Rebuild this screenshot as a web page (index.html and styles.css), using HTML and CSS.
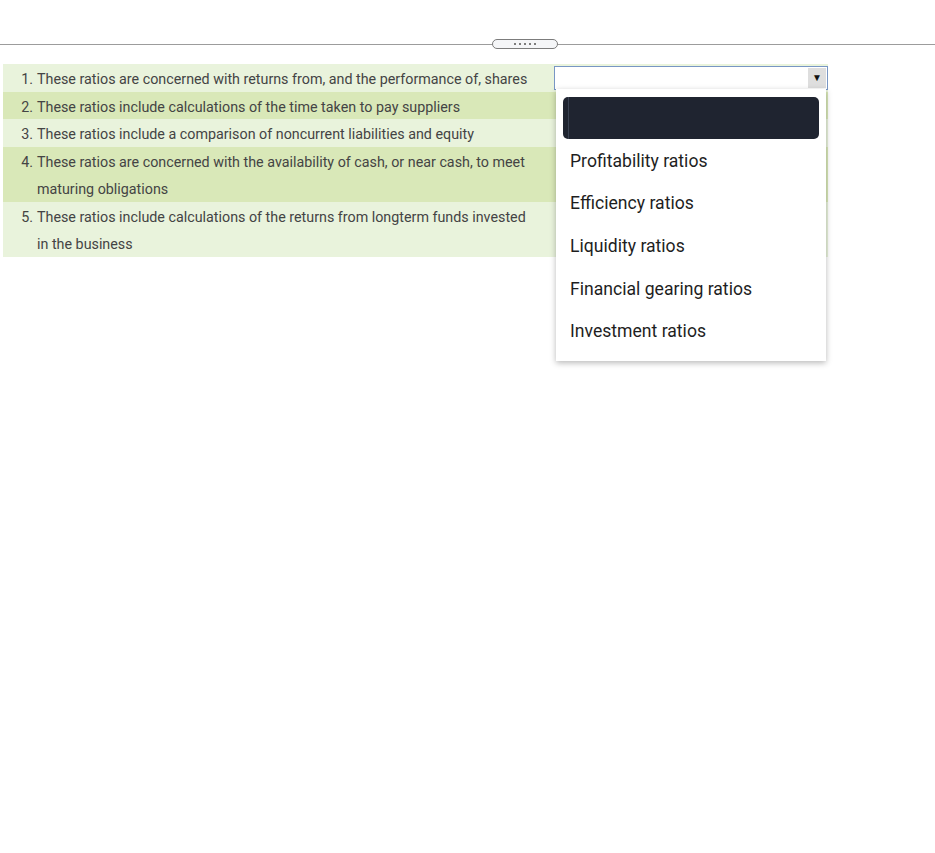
FILE: index.html
```html
<!DOCTYPE html>
<html>
<head>
<meta charset="utf-8">
<link rel="stylesheet" href="styles.css">
</head>
<body>
<div class="splitter">
  <div class="handle"><span></span><span></span><span></span><span></span><span></span></div>
</div>
<div class="quiz">
  <div class="row light">
    <div class="num">1.</div>
    <div class="txt">These ratios are concerned with returns from, and the performance of, shares</div>
    <div class="sel">
      <div class="select"><div class="arrow">▼</div></div>
    </div>
  </div>
  <div class="row dark">
    <div class="num">2.</div>
    <div class="txt">These ratios include calculations of the time taken to pay suppliers</div>
    <div class="sel"></div>
  </div>
  <div class="row light">
    <div class="num">3.</div>
    <div class="txt">These ratios include a comparison of noncurrent liabilities and equity</div>
    <div class="sel"></div>
  </div>
  <div class="row dark">
    <div class="num">4.</div>
    <div class="txt">These ratios are concerned with the availability of cash, or near cash, to meet maturing obligations</div>
    <div class="sel"></div>
  </div>
  <div class="row light">
    <div class="num">5.</div>
    <div class="txt">These ratios include calculations of the returns from longterm funds invested in the business</div>
    <div class="sel"></div>
  </div>
  <div class="dropdown">
    <div class="opt active"><span class="edge"></span></div>
    <div class="opt">Profitability ratios</div>
    <div class="opt">Efficiency ratios</div>
    <div class="opt">Liquidity ratios</div>
    <div class="opt">Financial gearing ratios</div>
    <div class="opt">Investment ratios</div>
  </div>
</div>
</body>
</html>
```
FILE: styles.css
```css
html, body {
  margin: 0;
  font-family: Roboto, "Liberation Sans", sans-serif;
  background: #fff;
}
.splitter {
  position: relative;
  height: 44px;
  border-bottom: 1px solid #9c9c9c;
}
.handle {
  position: absolute;
  left: 492px;
  top: 39px;
  width: 64px;
  height: 8px;
  border: 1px solid #7c7c7c;
  border-radius: 5px;
  background: #f5f6f8;
  display: flex;
  justify-content: center;
  align-items: center;
  gap: 3px;
}
.handle span {
  width: 2px;
  height: 2px;
  background: #555;
  border-radius: 1px;
}
.quiz {
  position: relative;
  margin: 19px 0 0 3px;
  width: 825px;
  min-height: 310px;
}
.row {
  display: grid;
  grid-template-columns: 34px 513px 278px;
  font-size: 14.3px;
  line-height: 27.5px;
  color: #444;
}
.light { background: #e9f3dc; }
.dark { background: #d9e8b8; }
.num, .txt {
  padding-top: 2px;
  margin-bottom: -2px;
}
.num {
  text-align: right;
  padding-right: 4px;
}
.txt {
  padding-right: 12px;
}
.select {
  margin: 2px 0 0 4px;
  height: 22px;
  border: 1px solid #7896c4;
  background: #fff;
  display: flex;
  justify-content: flex-end;
}
.arrow {
  width: 18px;
  height: 20px;
  margin: 1px 1px 0 0;
  background: #dedede;
  font-size: 10px;
  line-height: 20px;
  text-align: center;
  color: #111;
}
.dropdown {
  position: absolute;
  left: 553px;
  top: 25px;
  width: 270px;
  height: 272px;
  box-sizing: border-box;
  padding: 8px 7px 0 7px;
  background: #fff;
  box-shadow: 0 2px 6px rgba(0, 0, 0, 0.28);
  z-index: 2;
}
.opt {
  height: 42.7px;
  line-height: 42px;
  padding-left: 7px;
  font-size: 17.6px;
  color: #1e1e1e;
}
.opt.active {
  height: 42px;
  margin-bottom: 0.7px;
  padding-left: 5px;
  background: #1f2430;
  border-radius: 5px;
  display: flex;
}
.edge {
  width: 1px;
  height: 100%;
  background: #3a4252;
}
```
